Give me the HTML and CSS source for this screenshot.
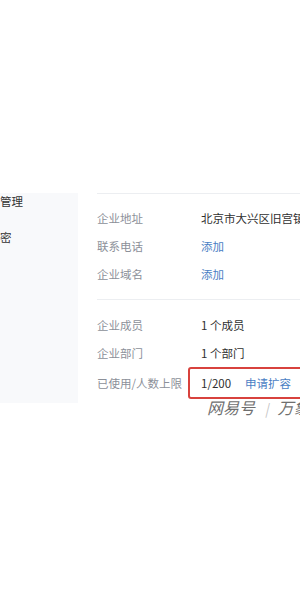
FILE: index.html
```html
<!DOCTYPE html>
<html lang="zh-CN">
  <head>
    <meta charset="UTF-8" />
    <meta name="viewport" content="width=device-width, initial-scale=1.0" />
    <title>企业信息</title>
    <link rel="stylesheet" href="styles.css">
  </head>
  <body>
    <div class="page">
      <div class="sidebar">
        <div class="side-item">管理</div>
        <div class="side-item">密</div>
      </div>
      <div class="main">
        <div class="section">
          <div class="row">
            <span class="label">企业地址</span>
            <span class="value">北京市大兴区旧宫镇</span>
          </div>
          <div class="row">
            <span class="label">联系电话</span>
            <a href="#" class="link">添加</a>
          </div>
          <div class="row">
            <span class="label">企业域名</span>
            <a href="#" class="link">添加</a>
          </div>
        </div>
        <div class="section">
          <div class="row">
            <span class="label">企业成员</span>
            <span class="value">1 个成员</span>
          </div>
          <div class="row">
            <span class="label">企业部门</span>
            <span class="value">1 个部门</span>
          </div>
          <div class="row">
            <span class="label">已使用/人数上限</span>
            <span class="value highlight">1/200<a href="#" class="link expand">申请扩容</a></span>
          </div>
        </div>
      </div>
    </div>
    <div class="watermark">网易号<span class="sep">|</span>万象</div>
  </body>
</html>
```

FILE: styles.css
```css
* {
  margin: 0;
  padding: 0;
  box-sizing: border-box;
}

body {
  font-family: "Noto Sans CJK SC", "Noto Sans", sans-serif;
  font-size: 11.5px;
  background: #fff;
  color: #333;
  width: 300px;
  height: 600px;
  overflow: hidden;
  position: relative;
}

.page {
  display: flex;
  padding-top: 193px;
}

.sidebar {
  width: 78px;
  height: 210px;
  background: #f8f9fb;
  display: flex;
  flex-direction: column;
  gap: 20px;
}

.side-item {
  line-height: 16px;
  color: #333;
  white-space: nowrap;
}

.main {
  flex: 1;
  margin-left: 19px;
  overflow: hidden;
}

.section {
  border-top: 1px solid #eceef1;
  padding: 10px 0 11px;
}

.section + .section {
  padding-top: 11px;
}

.row {
  display: grid;
  grid-template-columns: 104px 220px;
  height: 28px;
  align-items: center;
  white-space: nowrap;
}

.label {
  color: #8c9099;
}

.value {
  color: #2f2f2f;
}

.link {
  color: #4a7ec4;
  text-decoration: none;
}

.highlight {
  display: flex;
  align-items: center;
  height: 32px;
  margin-left: -13px;
  padding-left: 11px;
  border: 2px solid #d8423d;
  border-radius: 3px;
}

.expand {
  margin-left: 14px;
}

/* watermark over the screenshot */
.watermark {
  position: absolute;
  top: 395px;
  left: 207px;
  font-size: 16px;
  font-style: italic;
  color: #6f6f6f;
  white-space: nowrap;
}

.sep {
  color: #c4c4c4;
  font-size: 13px;
  margin: 0 9px 0 10px;
}
```
